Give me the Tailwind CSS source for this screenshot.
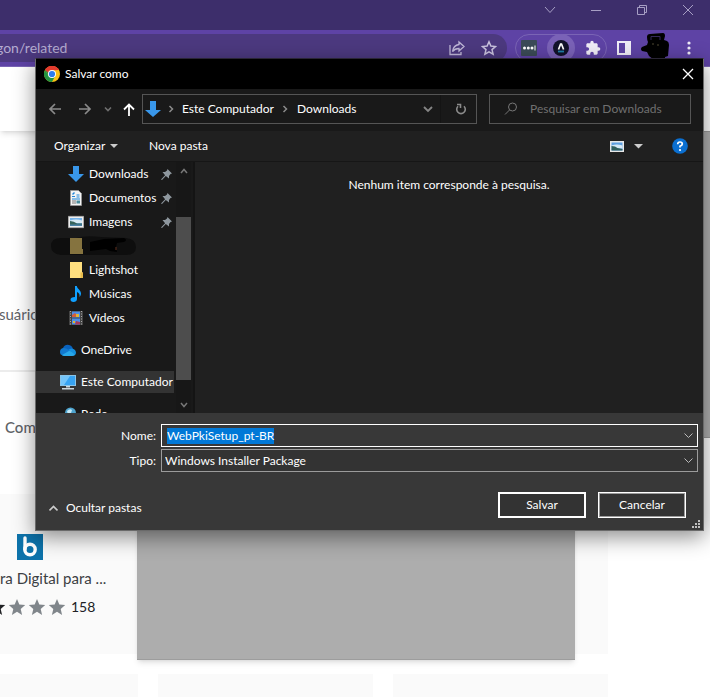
<!DOCTYPE html>
<html lang="pt-BR">
<head>
  <meta charset="UTF-8" />
  <meta name="viewport" content="width=device-width, initial-scale=1.0" />
  <title>Salvar como</title>
  <script src="https://cdn.jsdelivr.net/npm/@tailwindcss/browser@4"></script>
</head>
<body class="relative min-h-screen overflow-hidden bg-white font-[Lato,'Open_Sans',sans-serif] text-xs">

  <!-- Browser window -->
  <header>
    <div class="flex h-[30px] items-start justify-end overflow-hidden bg-[#3d2e6b] text-[#a79fc4]">
      <button class="flex h-5 w-[46px] shrink-0 items-center justify-center" aria-label="Pesquisar guias">
        <svg class="h-3 w-3" viewBox="0 0 12 12" fill="none" stroke="currentColor"><path d="M1 3l5 5.500L11 3" /></svg>
      </button>
      <button class="flex h-5 w-[46px] shrink-0 items-center justify-center" aria-label="Minimizar">
        <svg class="h-3 w-3" viewBox="0 0 12 12" fill="none" stroke="currentColor"><path d="M1 6.500h10" /></svg>
      </button>
      <button class="flex h-5 w-[46px] shrink-0 items-center justify-center" aria-label="Restaurar">
        <svg class="h-3 w-3" viewBox="0 0 12 12" fill="none" stroke="currentColor"><path d="M1.500 3.500h7v7h-7zM3.500 3.500v-2h7v7h-2" /></svg>
      </button>
      <button class="-mr-px flex h-5 w-[46px] shrink-0 items-center justify-center" aria-label="Fechar janela">
        <svg class="h-3 w-3" viewBox="0 0 12 12" fill="none" stroke="currentColor"><path d="M1 1l10 10M11 1L1 11" /></svg>
      </button>
    </div>
    <div class="flex h-[37px] items-center border-b border-[#7a64b5] bg-[#5e43a5] pr-[13px]">
      <div class="flex h-7 flex-1 items-center rounded-r-full bg-[#4c397f] pr-[10px]">
        <input type="text" aria-label="Endereço" value="gon/related" class="-ml-1 min-w-0 flex-1 bg-transparent text-sm text-[#b4abd0] outline-none" />
        <button aria-label="Compartilhar" class="mr-4 text-[#c0b8d8]">
          <svg class="h-4 w-4" viewBox="0 0 16 16" fill="none" stroke="currentColor" stroke-width="1.300"><path d="M1 5v9.500h11V12M10 2l5 4.500-5 4.500V8.500C7 8.500 5 9.500 3.500 11.500 4 8 6 5 10 4.500z" /></svg>
        </button>
        <button aria-label="Favoritos" class="text-[#c9c2de]">
          <svg class="h-4 w-4" viewBox="0 0 16 16" fill="none" stroke="currentColor" stroke-width="1.500"><path d="M8 1.800l1.900 4.300 4.600.4-3.500 3.100 1.100 4.600L8 11.800l-4.100 2.400L5 9.600 1.500 6.500l4.600-.4z" /></svg>
        </button>
      </div>
      <div class="ml-2 flex h-7 w-[92px] items-center rounded-full border border-[#7a64b5] pl-[5px]">
        <button aria-label="Extensão de senhas">
          <svg class="h-4 w-4" viewBox="0 0 16 16"><rect width="16" height="16" rx="1" fill="#3b4b57" /><g fill="#fff"><circle cx="3.500" cy="8" r="1.500" /><circle cx="7.300" cy="8" r="1.500" /><circle cx="11" cy="8" r="1.500" /><rect x="13.500" y="5.500" width="1" height="5" /></g></svg>
        </button>
        <button aria-label="Web PKI" class="ml-[10px] flex h-7 w-7 items-center justify-center rounded-full bg-[#7a62b7]">
          <svg class="h-4 w-4" viewBox="0 0 16 16"><circle cx="8" cy="8" r="8" fill="#12122a" /><path d="M5.500 9.500L7.600 4h.9l2.100 5.500" fill="none" stroke="#fff" stroke-width="1.700" /><path d="M5 11.500h6" stroke="#1f7fa8" stroke-width="1.800" /></svg>
        </button>
        <button aria-label="Extensões" class="ml-[10px] text-[#f0edf7]">
          <svg class="h-4 w-4" viewBox="0 0 24 24" fill="currentColor"><path d="M20.500 11H19V7c0-1.100-.9-2-2-2h-4V3.500a2.500 2.500 0 0 0-5 0V5H4c-1.100 0-2 .9-2 2v3.800h1.500a2.700 2.700 0 0 1 0 5.400H2V20c0 1.100.9 2 2 2h3.800v-1.500a2.700 2.700 0 0 1 5.400 0V22H17c1.100 0 2-.9 2-2v-4h1.500a2.500 2.500 0 0 0 0-5z" /></svg>
        </button>
      </div>
      <button aria-label="Painel lateral" class="ml-[10px]">
        <svg class="h-[14px] w-[14px]" viewBox="0 0 14 14"><path fill="#f0edf7" fill-rule="evenodd" d="M0 0h14v14H0zM2 2v10h6V2z" /></svg>
      </button>
      <div class="ml-[10px] -mt-1">
        <svg class="h-7 w-7" viewBox="0 0 28 28"><path d="M6 5q0-3 3-3l13-1q2 0 2 3l-1 4 3 1q2 1 2 4l-1 11-3 1v2q-3 1-7 0l-3 1q-4-2-6-4l-2-4-5-1q-2-2 0-4l5-2 1-3q-1-2-1-5z" fill="#000" /><path d="M10 8V4.500h9V8" fill="none" stroke="#35285c" /><path d="M17 12v2M12 11v2" stroke="#514a35" /></svg>
      </div>
      <button aria-label="Menu" class="ml-3 text-[#f0edf7]">
        <svg class="h-4 w-4" viewBox="0 0 16 16" fill="currentColor"><circle cx="8" cy="3" r="1.600" /><circle cx="8" cy="8" r="1.600" /><circle cx="8" cy="13" r="1.600" /></svg>
      </button>
    </div>
  </header>

  <!-- Store page -->
  <main class="relative text-[#5f6368]">
    <div class="h-16 shadow-md"></div>
    <div class="flex h-[241px] items-center border-b-2 border-[#ececec]">
      <p class="mt-32 -ml-px text-[15px]">suário</p>
    </div>
    <h2 class="pt-[45px] pb-[57px] pl-[5px] text-[15px] leading-5 font-medium">Com</h2>
    <div class="grid grid-cols-[138px_215px_215px] gap-5">
      <article class="h-40 bg-[#fafafa] pt-10">
        <svg class="ml-[17px] h-[26px] w-[26px]" viewBox="0 0 26 26"><rect width="26" height="26" fill="#0d73ab" /><path d="M8 4v11" stroke="#fff" stroke-width="3.400" stroke-linecap="round" /><circle cx="13" cy="15.500" r="5.200" fill="none" stroke="#fff" stroke-width="3.400" /></svg>
        <h3 class="mt-2 text-[15px] leading-5 whitespace-nowrap text-[#3c4043]">ra Digital para ...</h3>
        <div class="mt-[9px] flex items-center">
          <svg class="h-[18px] w-[66px]" viewBox="0 0 66 18"><defs><path id="star" d="M8 0l2.300 5.600 5.900.5-4.500 3.900 1.400 5.900L8 12.700l-5.100 3.200L4.300 10-.2 6.100l5.900-.5z" /></defs><use href="#star" x="-11" y="1" fill="#202124" /><use href="#star" x="9" y="1" fill="#80868b" /><use href="#star" x="29" y="1" fill="#80868b" /><use href="#star" x="49" y="1" fill="#80868b" /></svg>
          <span class="ml-[5px] text-sm text-[#202124]">158</span>
        </div>
      </article>
      <article class="bg-[#fafafa]"></article>
      <article class="bg-[#fafafa]"></article>
      <article class="h-[23px] bg-[#fafafa]"></article>
      <article class="bg-[#fafafa]"></article>
      <article class="bg-[#fafafa]"></article>
    </div>
    <!-- Dimmed panels over the page -->
    <div class="absolute top-16 right-0 h-[307px] w-40 border-y border-[#9a9a9a] bg-[#b1b1b1]"></div>
    <div class="absolute top-[371px] left-[137px] h-[222px] w-[438px] border-b border-[#9d9d9d] bg-[#adadad] shadow-md"></div>
  </main>

  <!-- Save dialog -->
  <section role="dialog" aria-labelledby="dialogTitle" class="absolute top-[58px] right-[6px] left-[35px] border border-[#6a6a6a] border-t-[#2a2535] text-white shadow-[0_6px_20px_rgba(0,0,0,0.45)]">
    <div class="flex h-[30px] items-center bg-black pr-[9px] pl-2">
      <svg class="h-4 w-4" viewBox="0 0 16 16"><circle cx="8" cy="8" r="8" fill="#fbc116" /><path d="M8 8L1.070 4A8 8 0 0 1 14.930 4L8 4.500z" fill="#e33b2e" /><path d="M1.070 4A8 8 0 0 0 8 16l3.200-6L8 8 4.800 10z" fill="#229342" /><path d="M1.070 4L5 10.500 8 8 8 4z" fill="#229342" /><path d="M1.070 4A8 8 0 0 1 14.930 4H8L4.600 7z" fill="#e33b2e" /><circle cx="8" cy="8" r="4" fill="#fff" /><circle cx="8" cy="8" r="3.100" fill="#2d7cee" /></svg>
      <h1 id="dialogTitle" class="ml-[5px] flex-1">Salvar como</h1>
      <button aria-label="Fechar">
        <svg class="h-3 w-3" viewBox="0 0 12 12" fill="none" stroke="currentColor" stroke-width="1.300"><path d="M1 1l10 10M11 1L1 11" /></svg>
      </button>
    </div>

    <!-- Address bar -->
    <div class="flex h-[42px] items-center bg-[#191919] pr-3 pb-[2px] pl-3 text-[#8a8a8a]">
      <button aria-label="Voltar"><svg class="h-[14px] w-[14px]" viewBox="0 0 14 14" fill="none" stroke="currentColor" stroke-width="1.700"><path d="M13 7H2M7 2L2 7l5 5" /></svg></button>
      <button aria-label="Avançar" class="ml-4"><svg class="h-[14px] w-[14px]" viewBox="0 0 14 14" fill="none" stroke="currentColor" stroke-width="1.700"><path d="M1 7h11M7 2l5 5-5 5" /></svg></button>
      <button aria-label="Locais recentes" class="ml-3"><svg class="h-2 w-2" viewBox="0 0 8 8" fill="none" stroke="#6f6f6f" stroke-width="1.600"><path d="M1 2.500l3 3 3-3" /></svg></button>
      <button aria-label="Acima" class="ml-[10px] text-white"><svg class="h-[14px] w-[14px]" viewBox="0 0 14 14" fill="none" stroke="currentColor" stroke-width="1.800"><path d="M7 14V3M2 7.500l5-5 5 5" /></svg></button>
      <div class="ml-[6px] flex h-[30px] flex-1 items-center border border-[#555] text-white">
        <svg class="ml-[2px] h-4 w-4" viewBox="0 0 16 16"><path d="M5 0h6v9h5l-8 7-8-7h5z" fill="#3997ea" /></svg>
        <svg class="ml-[6px] h-2 w-2" viewBox="0 0 8 8" fill="none" stroke="#8a8a8a" stroke-width="1.500"><path d="M2.500 1l3 3-3 3" /></svg>
        <button class="ml-[7px] w-[93px] text-left whitespace-nowrap">Este Computador</button>
        <svg class="ml-[6px] h-2 w-2" viewBox="0 0 8 8" fill="none" stroke="#8a8a8a" stroke-width="1.500"><path d="M2.500 1l3 3-3 3" /></svg>
        <button class="ml-2 flex-1 text-left">Downloads</button>
        <button aria-label="Locais anteriores" class="mr-[7px]"><svg class="h-[10px] w-[10px]" viewBox="0 0 10 10" fill="none" stroke="#858585" stroke-width="1.800"><path d="M1 3l4 4 4-4" /></svg></button>
        <button aria-label="Atualizar" class="flex h-full w-9 items-center justify-center border-l border-[#141414] pl-1">
          <svg class="h-3 w-3" viewBox="0 0 12 12" fill="none" stroke="#8a8a8a" stroke-width="1.600"><path d="M9 3.200A4.300 4.300 0 1 1 3 3.200M2 1.500h3.500V5" /></svg>
        </button>
      </div>
      <label class="ml-3 flex h-[30px] w-[202px] items-center border border-[#555] pl-[14px]">
        <svg class="h-[14px] w-[14px]" viewBox="0 0 14 14" fill="none" stroke="#777"><circle cx="8.500" cy="5" r="4" /><path d="M5.500 8L1 12.500" /></svg>
        <input type="search" aria-label="Pesquisar" placeholder="Pesquisar em Downloads" class="ml-3 min-w-0 flex-1 bg-transparent outline-none placeholder:text-[#707070]" />
      </label>
    </div>

    <!-- Commands -->
    <div class="flex h-[31px] items-center border-b border-[#161616] bg-[#202020] pr-[15px] pl-[18px]">
      <button class="flex w-[64px] items-center justify-between">Organizar <svg class="h-2 w-2" viewBox="0 0 8 8"><path d="M0 2h8L4 6z" fill="#ccc" /></svg></button>
      <button class="ml-[31px]">Nova pasta</button>
      <button aria-label="Alterar modo de exibição" class="ml-auto flex items-center">
        <svg class="h-[11px] w-[14px]" viewBox="0 0 14 11"><path fill="#e8e8e8" d="M0 0h14v11H0z" /><path fill="#5c9fe0" d="M1.500 1.500h11v8h-11z" /><path fill="#d5e8f5" d="M1.500 4.500q5-2 11 0v3h-11z" /><path fill="#315f5c" d="M1.500 5q4 0 6 2l5 1v1.500h-11z" /></svg>
        <svg class="ml-[10px] h-2 w-[9px]" viewBox="0 0 9 8"><path d="M0 2h9L4.500 6.500z" fill="#ccc" /></svg>
      </button>
      <button aria-label="Ajuda" class="ml-[29px]">
        <svg class="h-4 w-4" viewBox="0 0 16 16"><circle cx="8" cy="8" r="7.800" fill="#0a6fd1" /><path d="M5.700 6.200Q5.700 4 8 4t2.300 2Q10.300 7.300 8 8.200v1.400" fill="none" stroke="#fff" stroke-width="1.700" /><circle cx="8" cy="12" r="1.100" fill="#fff" /></svg>
      </button>
    </div>

    <div class="flex h-[251px] bg-[#202020]">
      <!-- Folder tree -->
      <nav class="flex w-[159px] shrink-0 overflow-hidden border-r-2 border-[#141414] bg-[#191919]">
        <ul class="w-[138px] shrink-0">
          <li class="flex h-6 items-center pl-8">
            <svg class="h-4 w-4 shrink-0" viewBox="0 0 16 16"><path d="M5 0h6v8h5l-8 8-8-8h5z" fill="#3997ea" /></svg>
            <a href="#" class="ml-[5px] flex-1">Downloads</a>
            <svg class="mr-[2px] h-[11px] w-[11px] shrink-0" viewBox="0 0 11 11"><path d="M6.500 0L11 4.500 9.500 5 8 7v2.500L4.800 6.900 1 11 0 10.500 4.100 6.200 1.500 3H4l2-1.500z" fill="#8e979e" /></svg>
          </li>
          <li class="flex h-6 items-center pl-8">
            <svg class="h-4 w-4 shrink-0" viewBox="0 0 16 16"><path fill="#f4f4f4" stroke="#999" stroke-width=".8" d="M2.500.5h8l3 3v12h-11z" /><path d="M4 6.500h3M8.500 5h3M8.500 7h3M4 9h8" stroke="#2186d8" stroke-width="1.200" /><path d="M4 11h4M4 13h4" stroke="#777" /><path d="M8.500 10.500h3.500v3H8.500z" fill="#4a8c9c" /><path d="M4.500 4.500l2-2" stroke="#2186d8" stroke-width="1.500" /></svg>
            <a href="#" class="ml-[5px] flex-1">Documentos</a>
            <svg class="mr-[2px] h-[11px] w-[11px] shrink-0" viewBox="0 0 11 11"><path d="M6.500 0L11 4.500 9.500 5 8 7v2.500L4.800 6.900 1 11 0 10.500 4.100 6.200 1.500 3H4l2-1.500z" fill="#8e979e" /></svg>
          </li>
          <li class="flex h-6 items-center pl-8">
            <svg class="h-4 w-4 shrink-0" viewBox="0 0 16 16"><path fill="#eee" stroke="#aaa" stroke-width=".6" d="M.3 2.300h15.400v11.400H.3z" /><path fill="#78b4ea" d="M2 4h12v8H2z" /><path fill="#d8ebf5" d="M2 6.500q6-2 12 0V9H2z" /><path fill="#36645c" d="M2 7q4 0 7 2.500h5V12H2z" /><path fill="#4b83a8" d="M2 10.500h12V12H2z" /></svg>
            <a href="#" class="ml-[5px] flex-1">Imagens</a>
            <svg class="mr-[2px] h-[11px] w-[11px] shrink-0" viewBox="0 0 11 11"><path d="M6.500 0L11 4.500 9.500 5 8 7v2.500L4.800 6.900 1 11 0 10.500 4.100 6.200 1.500 3H4l2-1.500z" fill="#8e979e" /></svg>
          </li>
          <li class="flex h-6 items-center pl-[15px]">
            <svg class="h-[22px] w-[86px]" viewBox="0 0 86 22"><path d="M10 3h15q10-3 25-1l25 1q10 1 10 9t-10 8H10Q0 19 0 11t10-8z" fill="#0e0e0e" /><path d="M19 3h12v11h1v5H19z" fill="#85733f" /><path d="M39 7l14-3 20-1q4 2 0 4l-7 1-1 4 1 5-7-1-4-2-16 2z" fill="#000" /><path d="M65 12v3" stroke="#62301e" /></svg>
          </li>
          <li class="flex h-6 items-center pl-8">
            <svg class="h-4 w-4 shrink-0" viewBox="0 0 16 16"><path fill="#ffdf7e" d="M2 0h12v10l1 1v5H2z" /><path fill="#e8bb4b" d="M12.500 10.500H15V16h-2.500z" /></svg>
            <a href="#" class="ml-[5px]">Lightshot</a>
          </li>
          <li class="flex h-6 items-center pl-8">
            <svg class="h-4 w-4 shrink-0" viewBox="0 0 16 16"><path d="M7 0h1.800c.4 3 4.200 4 4.200 7.500 0 1.500-.7 2.500-1.500 3.500.6-2.800-.7-4.400-2.500-5v7c0 2-1.500 3-3.500 3S2.500 15 2.500 13.500 4 11 7 11z" fill="#10a0ff" /></svg>
            <a href="#" class="ml-[5px]">Músicas</a>
          </li>
          <li class="flex h-6 items-center pl-8">
            <svg class="h-4 w-4 shrink-0" viewBox="0 0 16 16"><path fill="#444" d="M1 1h14v14H1z" /><path d="M2.500 1v14M13.500 1v14" stroke="#aaa" stroke-width="1" stroke-dasharray="1 1.500" /><path fill="#4b8ee8" d="M4 1.500h8v6H4zM4 8.500h8v6H4z" /><path fill="#d35d3d" d="M4 5l3-2 2 2v2H4z" /><path fill="#dfb532" d="M8 4h3v3H8zM5 11h2v2H5z" /><path fill="#a53a58" d="M8 11l4 1v2.500H7z" /></svg>
            <a href="#" class="ml-[5px]">Vídeos</a>
          </li>
          <li class="mt-2 flex h-6 items-center pl-6">
            <svg class="h-4 w-4 shrink-0" viewBox="0 0 16 16"><path d="M3 6q2-4 6-3 3 .5 4 4l-5 3-6-1z" fill="#0a62bd" /><path d="M8 8q4-3 7 0 2 3 0 5l-3 .5-5-3z" fill="#1490df" /><path d="M4 6q-4 0-4 4 0 3 3 3.500l7-4.500Q7 6 4 6z" fill="#1279cf" /><path d="M2 13l7-4q2 0 6 4-1 1-3 1H4q-1.500 0-2-1z" fill="#28a8ea" /></svg>
            <a href="#" class="ml-[5px]">OneDrive</a>
          </li>
          <li class="mt-2 flex h-6 items-center border-y border-[#191919] bg-[#333] bg-clip-padding pl-6">
            <svg class="h-4 w-4 shrink-0" viewBox="0 0 16 16"><path fill="#8ac4e8" d="M0 1h16v11H0z" /><path fill="#37a3f2" d="M1 2h14v9H1z" /><path fill="#75c5fa" d="M1 2h9l-6 9H1z" /><path fill="#ccd7de" d="M6 12h4v1.500H6zM2 14h12v1.500H2z" /></svg>
            <a href="#" class="ml-[5px] whitespace-nowrap">Este Computador</a>
          </li>
          <li class="mt-2 flex h-6 items-center pl-6">
            <svg class="h-4 w-4 shrink-0" viewBox="0 0 16 16"><path fill="#4e9fd0" d="M0 8h10v6H0z" /><circle cx="10.500" cy="7" r="5.500" fill="#4ea4cf" /><path d="M7 5q3-3 5-1l-1 3-3 2z" fill="#c5eaf7" /></svg>
            <a href="#" class="ml-[5px]">Rede</a>
          </li>
        </ul>
        <div class="ml-[2px] flex h-full w-[15px] shrink-0 flex-col items-center bg-[#171717]">
          <svg class="mt-[5px] h-2 w-2 shrink-0" viewBox="0 0 8 8" fill="none" stroke="#777" stroke-width="1.500"><path d="M1 6l3-3.500L7 6" /></svg>
          <div class="mt-[42px] h-[163px] w-full bg-[#4d4d4d]"></div>
          <svg class="mt-[21px] h-2 w-2 shrink-0" viewBox="0 0 8 8" fill="none" stroke="#777" stroke-width="1.500"><path d="M1 2l3 3.500L7 2" /></svg>
        </div>
      </nav>
      <p class="flex-1 pt-[15px] text-center">Nenhum item corresponde à pesquisa.</p>
    </div>

    <!-- File name and type -->
    <form class="relative bg-[#383838] pt-[11px]">
      <div class="flex items-center pr-[5px]">
        <label for="fileName" class="w-[120px] text-right">Nome:</label>
        <div class="ml-[5px] flex h-[23px] flex-1 items-center border border-white pr-1 pl-[5px]">
          <input id="fileName" type="text" value="WebPkiSetup_pt-BR" class="min-w-0 flex-1 bg-transparent outline-none selection:bg-[#0078d7] selection:text-white" />
          <svg class="h-[9px] w-[9px]" viewBox="0 0 9 9" fill="none" stroke="#bbb"><path d="M.5 2.500l4 4 4-4" /></svg>
        </div>
      </div>
      <div class="mt-[2px] flex items-center pr-[5px]">
        <label for="fileType" class="w-[120px] text-right">Tipo:</label>
        <div class="ml-[5px] flex h-[23px] flex-1 items-center border border-[#9b9b9b] bg-[#333] pr-1 pl-[3px]">
          <select id="fileType" class="min-w-0 flex-1 appearance-none bg-transparent outline-none">
            <option>Windows Installer Package</option>
          </select>
          <svg class="h-[9px] w-[9px]" viewBox="0 0 9 9" fill="none" stroke="#bbb"><path d="M.5 2.500l4 4 4-4" /></svg>
        </div>
      </div>
      <div class="flex items-center pt-5 pr-[17px] pb-3 pl-[13px]">
        <button type="button" class="mt-[6px] flex items-center">
          <svg class="mr-2 h-[9px] w-[9px]" viewBox="0 0 9 9" fill="none" stroke="#ccc" stroke-width="1.600"><path d="M.5 6.500l4-4 4 4" /></svg>
          Ocultar pastas
        </button>
        <button type="button" class="ml-auto h-[26px] w-[88px] border-2 border-white bg-[#333]">Salvar</button>
        <button type="button" class="ml-3 h-[26px] w-[88px] border border-white bg-[#333] inset-ring inset-ring-[#9b9b9b]">Cancelar</button>
      </div>
      <svg class="absolute right-[3px] bottom-[2px] h-2 w-2" viewBox="0 0 8 8" fill="#bfbfbf"><path d="M6 0h2v2H6zM3 3h2v2H3zM6 3h2v2H6zM0 6h2v2H0zM3 6h2v2H3zM6 6h2v2H6z" /></svg>
    </form>
  </section>

  <script>
    const fileName = document.getElementById('fileName');
    fileName.focus({ preventScroll: true });
    fileName.select();
  </script>
</body>
</html>
